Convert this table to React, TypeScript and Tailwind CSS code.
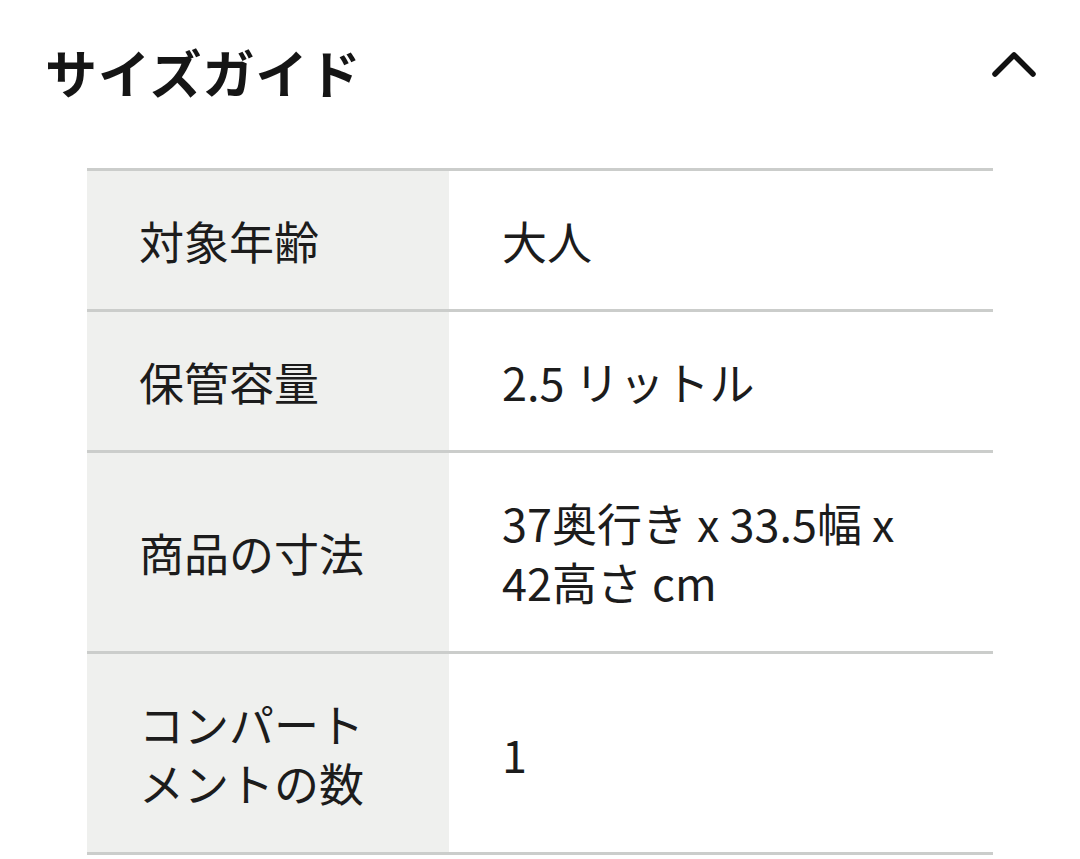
import React from "react";

const rows: { label: React.ReactNode; value: React.ReactNode; h: string }[] = [
  { label: "対象年齢", value: "大人", h: "h-[138px]" },
  { label: "保管容量", value: "2.5 リットル", h: "h-[138px]" },
  {
    label: "商品の寸法",
    value: (
      <>
        37奥行き x 33.5幅 x
        <br />
        42高さ cm
      </>
    ),
    h: "h-[198px]",
  },
  {
    label: (
      <>
        コンパート
        <br />
        メントの数
      </>
    ),
    value: "1",
    h: "h-[198px]",
  },
];

export default function App() {
  return (
    <div
      className="w-[1080px] h-[859px] bg-white overflow-hidden text-[#1c1c1c]"
      style={{ fontFamily: '"Noto Sans CJK JP", "Noto Sans", sans-serif' }}
    >
      <div className="h-[148px] flex items-center justify-between pl-[45px] pr-[44px]">
        <h2 className="text-[52px] font-bold tracking-[1px] text-[#151515] leading-none mb-[4px]">
          サイズガイド
        </h2>
        <svg width="44" height="30" viewBox="0 0 44 30" className="mb-[22px]">
          <polyline
            points="3,26 22,7 41,26"
            fill="none"
            stroke="#111"
            strokeWidth="5.5"
            strokeLinecap="round"
            strokeLinejoin="round"
          />
        </svg>
      </div>
      <div className="mt-[20px] ml-[87px] w-[906px] border-t-[3px] border-[#cbcdcb]">
        {rows.map((r, i) => (
          <div key={i} className="flex border-b-[3px] border-[#cbcdcb]">
            <div
              className={`w-[362px] ${r.h} bg-[#eff0ee] flex items-center pl-[52px] text-[45px] font-normal leading-[59px]`}
            >
              <div>{r.label}</div>
            </div>
            <div
              className={`flex-1 ${r.h} flex items-center pl-[53px] text-[45px] font-normal leading-[59px]`}
            >
              <div>{r.value}</div>
            </div>
          </div>
        ))}
      </div>
    </div>
  );
}
